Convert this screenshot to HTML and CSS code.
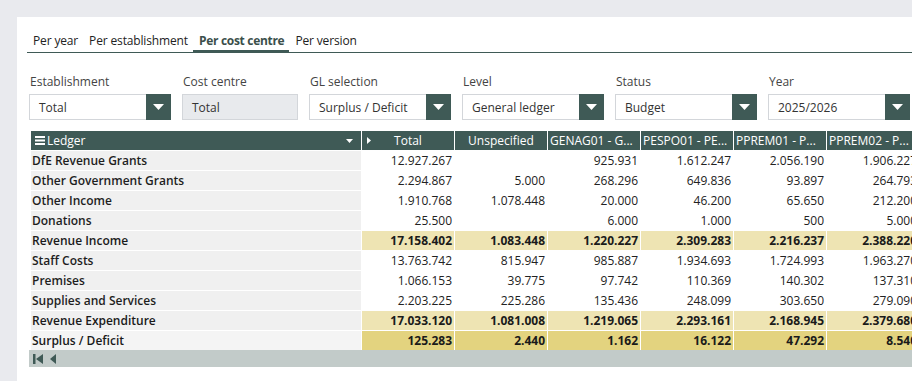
FILE: index.html
```html
<!DOCTYPE html>
<html>
<head>
<meta charset="utf-8">
<link rel="stylesheet" href="styles.css">
</head>
<body>
<div class="panel">
  <div class="tabs">
    <div class="tab">Per year</div>
    <div class="tab">Per establishment</div>
    <div class="tab active">Per cost centre</div>
    <div class="tab">Per version</div>
  </div>

  <div class="filters">
    <div class="field">
      <div class="label">Establishment</div>
      <div class="select"><span class="val">Total</span><span class="btn"><svg width="11" height="6" viewBox="0 0 11 6"><path d="M0 0H11L5.5 6Z" fill="#fff"/></svg></span></div>
    </div>
    <div class="field narrow">
      <div class="label">Cost centre</div>
      <div class="select disabled"><span class="val">Total</span></div>
    </div>
    <div class="field">
      <div class="label">GL selection</div>
      <div class="select"><span class="val">Surplus / Deficit</span><span class="btn"><svg width="11" height="6" viewBox="0 0 11 6"><path d="M0 0H11L5.5 6Z" fill="#fff"/></svg></span></div>
    </div>
    <div class="field">
      <div class="label">Level</div>
      <div class="select"><span class="val">General ledger</span><span class="btn"><svg width="11" height="6" viewBox="0 0 11 6"><path d="M0 0H11L5.5 6Z" fill="#fff"/></svg></span></div>
    </div>
    <div class="field">
      <div class="label">Status</div>
      <div class="select"><span class="val">Budget</span><span class="btn"><svg width="11" height="6" viewBox="0 0 11 6"><path d="M0 0H11L5.5 6Z" fill="#fff"/></svg></span></div>
    </div>
    <div class="field">
      <div class="label">Year</div>
      <div class="select"><span class="val">2025/2026</span><span class="btn"><svg width="11" height="6" viewBox="0 0 11 6"><path d="M0 0H11L5.5 6Z" fill="#fff"/></svg></span></div>
    </div>
  </div>

  <div class="grid-wrap">
    <div class="row head">
      <div class="c lead">
        <svg class="ham" width="10" height="9" viewBox="0 0 10 9"><rect x="0" y="0" width="10" height="2" fill="#fff"/><rect x="0" y="3.5" width="10" height="2" fill="#fff"/><rect x="0" y="7" width="10" height="2" fill="#fff"/></svg><span>Ledger</span>
        <svg class="dd" width="7" height="4" viewBox="0 0 7 4"><path d="M0 0H7L3.5 4Z" fill="#fff"/></svg>
      </div>
      <div class="c center"><svg class="exp" width="4" height="7" viewBox="0 0 4 7"><path d="M0 0L4 3.5L0 7Z" fill="#fff"/></svg>Total</div>
      <div class="c center">Unspecified</div>
      <div class="c">GENAG01 - G...</div>
      <div class="c">PESPO01 - PE...</div>
      <div class="c">PPREM01 - P...</div>
      <div class="c">PPREM02 - P...</div>
    </div>
    <div class="row"><div class="c lead">DfE Revenue Grants</div><div class="c">12.927.267</div><div class="c"></div><div class="c">925.931</div><div class="c">1.612.247</div><div class="c">2.056.190</div><div class="c">1.906.227</div></div>
    <div class="row"><div class="c lead">Other Government Grants</div><div class="c">2.294.867</div><div class="c">5.000</div><div class="c">268.296</div><div class="c">649.836</div><div class="c">93.897</div><div class="c">264.793</div></div>
    <div class="row"><div class="c lead">Other Income</div><div class="c">1.910.768</div><div class="c">1.078.448</div><div class="c">20.000</div><div class="c">46.200</div><div class="c">65.650</div><div class="c">212.200</div></div>
    <div class="row"><div class="c lead">Donations</div><div class="c">25.500</div><div class="c"></div><div class="c">6.000</div><div class="c">1.000</div><div class="c">500</div><div class="c">5.000</div></div>
    <div class="row sub"><div class="c lead">Revenue Income</div><div class="c">17.158.402</div><div class="c">1.083.448</div><div class="c">1.220.227</div><div class="c">2.309.283</div><div class="c">2.216.237</div><div class="c">2.388.220</div></div>
    <div class="row"><div class="c lead">Staff Costs</div><div class="c">13.763.742</div><div class="c">815.947</div><div class="c">985.887</div><div class="c">1.934.693</div><div class="c">1.724.993</div><div class="c">1.963.270</div></div>
    <div class="row"><div class="c lead">Premises</div><div class="c">1.066.153</div><div class="c">39.775</div><div class="c">97.742</div><div class="c">110.369</div><div class="c">140.302</div><div class="c">137.310</div></div>
    <div class="row"><div class="c lead">Supplies and Services</div><div class="c">2.203.225</div><div class="c">225.286</div><div class="c">135.436</div><div class="c">248.099</div><div class="c">303.650</div><div class="c">279.090</div></div>
    <div class="row sub"><div class="c lead">Revenue Expenditure</div><div class="c">17.033.120</div><div class="c">1.081.008</div><div class="c">1.219.065</div><div class="c">2.293.161</div><div class="c">2.168.945</div><div class="c">2.379.680</div></div>
    <div class="row grand"><div class="c lead">Surplus / Deficit</div><div class="c">125.283</div><div class="c">2.440</div><div class="c">1.162</div><div class="c">16.122</div><div class="c">47.292</div><div class="c">8.540</div></div>
  </div>
  <div class="scrollbar">
    <svg width="10" height="10" viewBox="0 0 10 10"><rect x="0" y="0" width="2.5" height="10" fill="#3f5a56"/><path d="M10 0V10L3 5Z" fill="#3f5a56"/></svg>
    <svg width="6" height="10" viewBox="0 0 6 10"><path d="M6 0V10L0 5Z" fill="#3f5a56"/></svg>
  </div>
</div>
</body>
</html>
```
FILE: styles.css
```css
html, body {
  margin: 0;
  padding: 0;
  background: #e9eaee;
  font-family: "Open Sans", "Liberation Sans", sans-serif;
  font-size: 12px;
  color: #222;
  overflow: hidden;
  height: 381px;
}
.panel {
  margin: 17px 0 0 17px;
  background: #fff;
  height: 364px;
  padding-left: 10px;
  overflow: hidden;
}
.tabs {
  display: flex;
  padding-top: 16px;
  border-bottom: 1px solid #3f5a56;
}
.tab {
  padding: 0 5px 3px 6px;
  line-height: 16px;
  color: #222;
  white-space: nowrap;
  letter-spacing: -0.15px;
}
.tab.active {
  font-weight: 700;
  color: #3b4f4b;
  letter-spacing: -0.3px;
  box-shadow: inset 0 -3px 0 #3f5a56;
  margin-bottom: -1px;
  padding-bottom: 4px;
}
.filters {
  display: flex;
  gap: 11px;
  margin: 22px 0 0 2px;
}
.field { width: 142px; flex: none; }
.field.narrow { width: 116px; }
.label {
  line-height: 14px;
  color: #444;
  margin-bottom: 5px;
  padding-left: 1px;
}
.select {
  height: 26px;
  box-sizing: border-box;
  border: 1px solid #d3d6da;
  display: flex;
  align-items: center;
  background: #fff;
}
.select.disabled { background: #e8eaed; }
.select .val {
  flex: 1;
  padding-left: 9px;
  color: #333;
  white-space: nowrap;
}
.select .btn {
  width: 25px;
  height: 26px;
  margin: -1px -1px -1px 0;
  background: #3f5a56;
  display: flex;
  align-items: center;
  justify-content: center;
}
.grid-wrap {
  margin: 11px 0 0 4px;
  width: 900px;
}
.row {
  display: grid;
  grid-template-columns: 330px repeat(6, 92px);
  column-gap: 1px;
  margin-bottom: 1px;
  height: 19px;
}
.c {
  line-height: 19px;
  text-align: right;
  padding: 0 2px;
  white-space: nowrap;
  overflow: hidden;
  color: #222;
}
.c.lead {
  text-align: left;
  background: #f0f0f0;
  font-weight: 600;
  color: #1e1e1e;
  padding-left: 1px;
}
.row.head .c {
  background: #3f5a56;
  color: #fff;
  font-weight: 400;
  text-align: left;
  padding-left: 2px;
}
.row.head .c.center { text-align: center; position: relative; }
.row.head .c.lead {
  display: flex;
  align-items: center;
  padding-left: 4px;
}
.ham { margin-right: 2px; }
.dd { margin-left: auto; margin-right: 6px; }
.exp { position: absolute; left: 5px; top: 6px; }
.row.sub .c { background: #eee4b3; font-weight: 700; color: #1a1a1a; }
.row.grand .c { background: #e3d37f; font-weight: 700; color: #1a1a1a; }
.row.sub .c.lead, .row.grand .c.lead { background: #f0f0f0; font-weight: 600; }
.row.grand .c.lead { background: #f4f4f4; }
.scrollbar {
  margin: -1px 0 0 2px;
  height: 17px;
  background: #c2cbc9;
  display: flex;
  align-items: center;
  gap: 7px;
  padding-left: 4px;
}
```
